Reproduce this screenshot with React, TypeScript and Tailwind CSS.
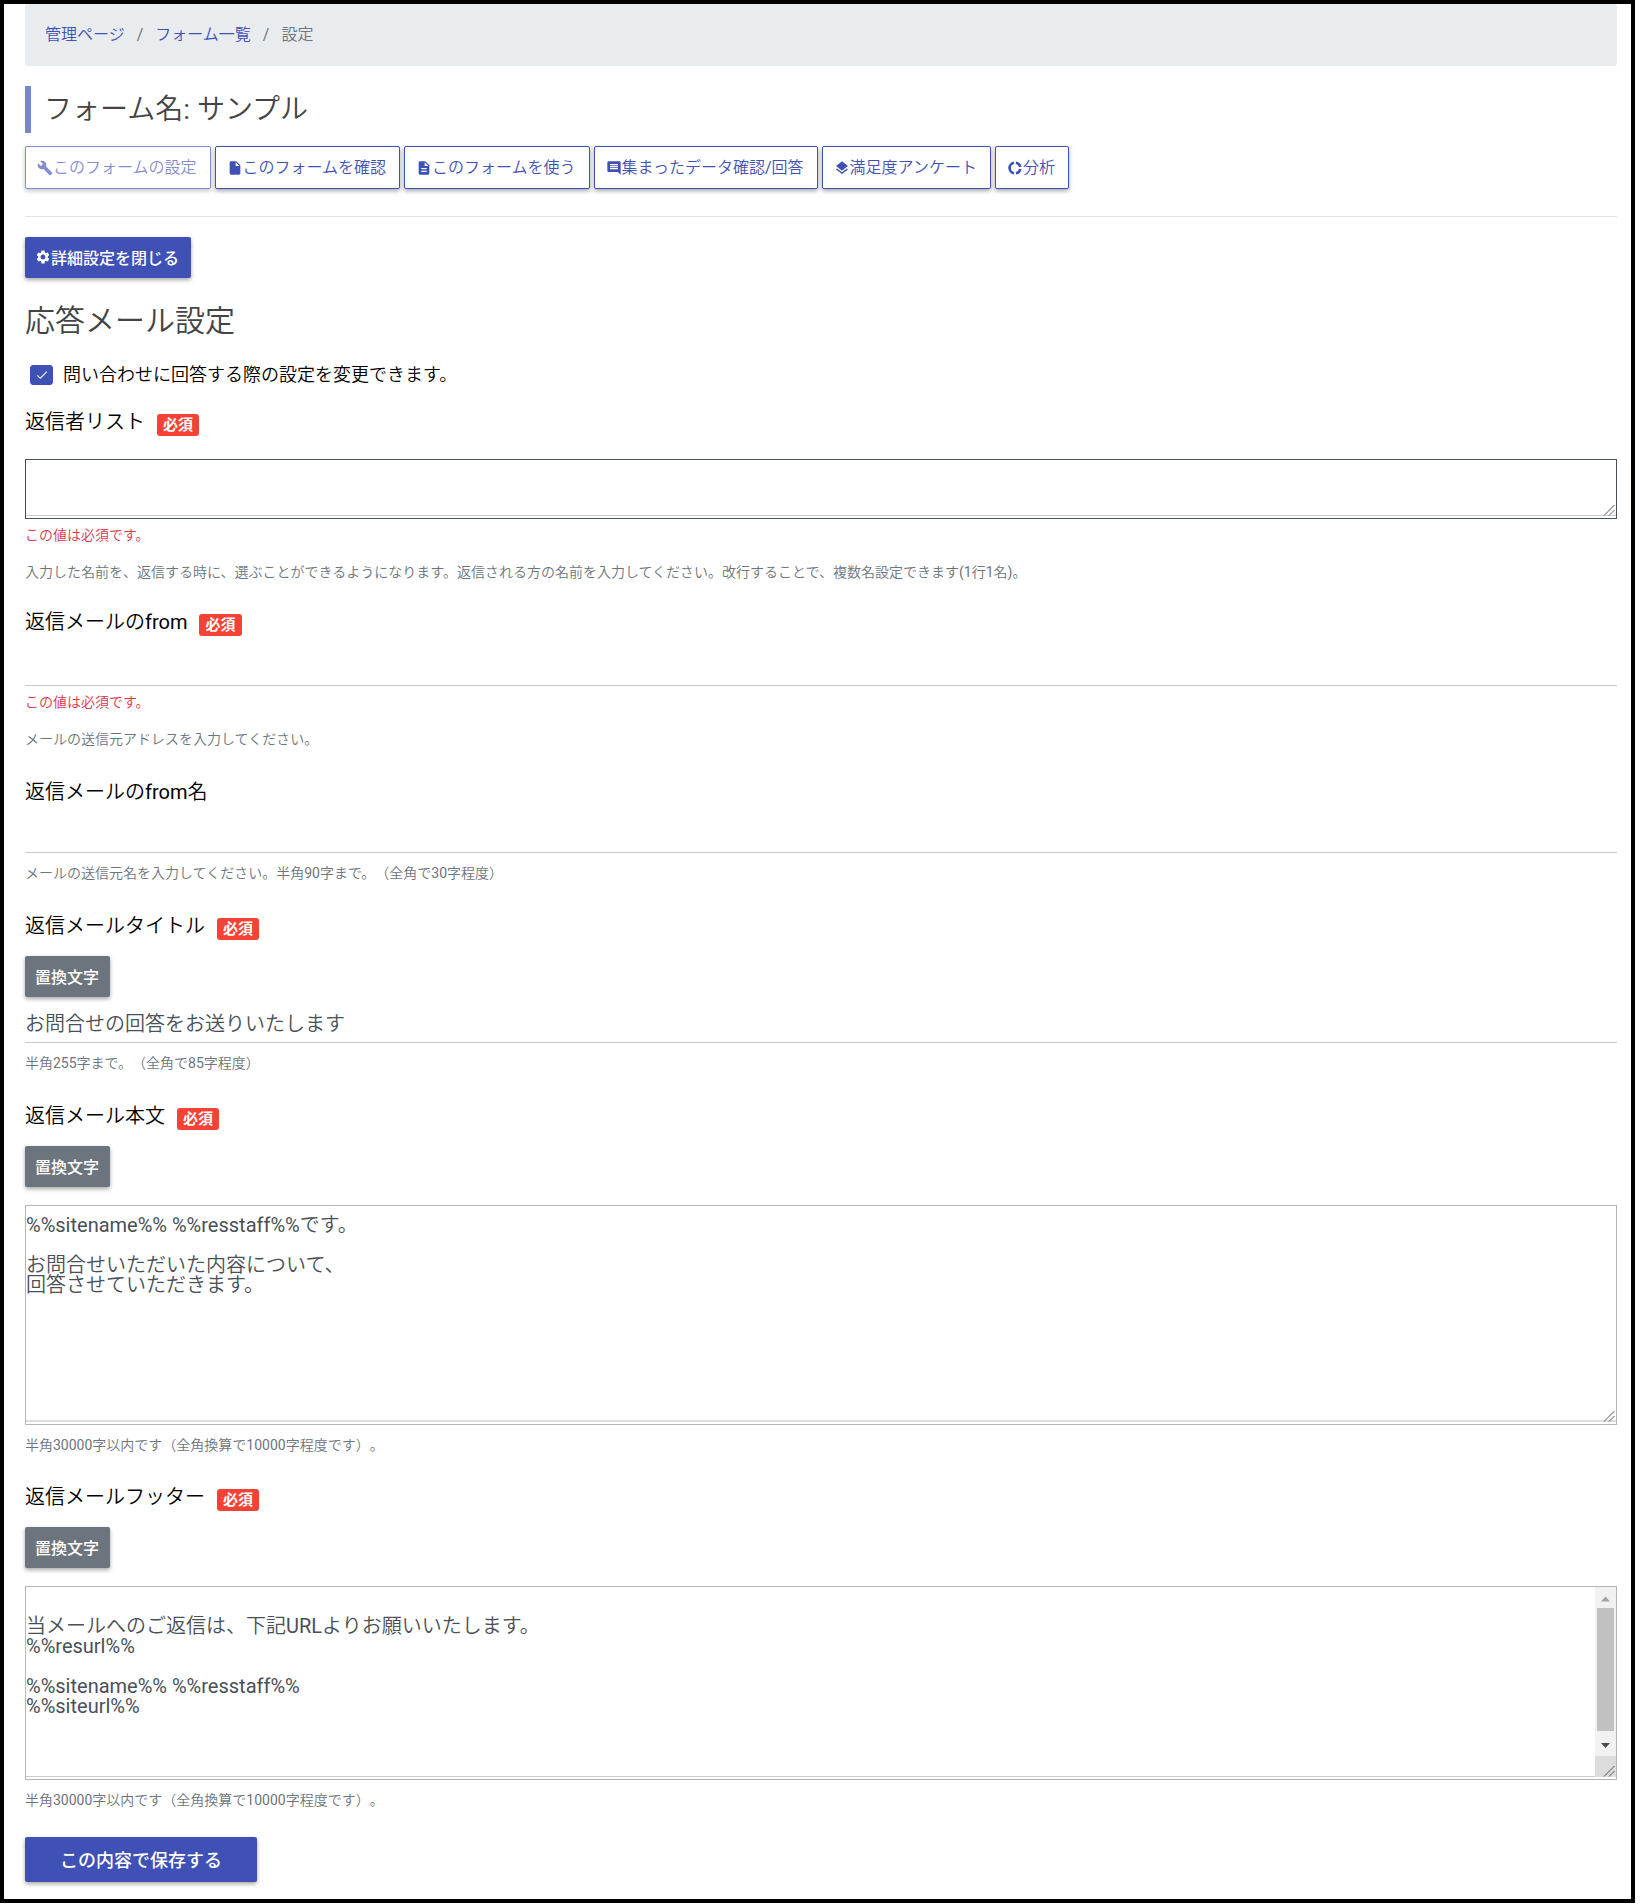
import { useState, type ReactNode } from "react";
import {
  MdBuild,
  MdInsertDriveFile,
  MdDescription,
  MdComment,
  MdLayers,
  MdSettings,
  MdCheck,
} from "react-icons/md";

function DonutIcon() {
  return (
    <svg viewBox="0 0 24 24" className="size-4" fill="none" stroke="currentColor" strokeWidth="4" aria-hidden="true">
      <path d="M13.4 4.1a8 8 0 0 1 6.500 6.500M19.900 13.400a8 8 0 0 1-6.500 6.500M10.600 19.900a8 8 0 0 1 0-15.800" />
    </svg>
  );
}

const tabs: { label: string; icon: ReactNode; disabled?: boolean }[] = [
  { label: "このフォームの設定", icon: <MdBuild className="size-4" />, disabled: true },
  { label: "このフォームを確認", icon: <MdInsertDriveFile className="size-4" /> },
  { label: "このフォームを使う", icon: <MdDescription className="size-4" /> },
  { label: "集まったデータ確認/回答", icon: <MdComment className="size-4" /> },
  { label: "満足度アンケート", icon: <MdLayers className="size-4" /> },
  { label: "分析", icon: <DonutIcon /> },
];

function FieldLabel({ id, required, children }: { id: string; required?: boolean; children: ReactNode }) {
  return (
    <div className="flex items-end gap-3">
      <label htmlFor={id} className="pt-[3px] text-xl leading-[27px] text-black">
        {children}
      </label>
      {required && (
        <span className="rounded-[3px] bg-[#f44336] px-[6px] pb-[2px] font-['Noto_Sans_CJK_JP',sans-serif] text-[15px] leading-5 font-bold text-white">必須</span>
      )}
    </div>
  );
}

function ErrorText({ children }: { children: ReactNode }) {
  return <p className="mt-[6px] text-sm leading-[21px] text-[#dc3545]">{children}</p>;
}

function HelpText({ wide, children }: { wide?: boolean; children: ReactNode }) {
  return (
    <p className={wide ? "mt-4 text-sm leading-[21px] text-[#6c757d]" : "mt-[10px] text-sm leading-[21px] text-[#6c757d]"}>
      {children}
    </p>
  );
}

function ReplaceButton() {
  return (
    <button
      type="button"
      className="mt-4 block rounded-[2px] bg-[#6c757d] pt-2 pr-[11px] pb-[9px] pl-[10px] font-['Noto_Sans_CJK_JP',sans-serif] text-base leading-6 font-medium text-white shadow-[0_2px_4px_rgba(0,0,0,0.35)]"
    >
      置換文字
    </button>
  );
}

function Grip() {
  return (
    <svg viewBox="0 0 12 12" className="pointer-events-none absolute right-px bottom-[2px] size-3" stroke="#555" fill="none" aria-hidden="true">
      <path d="M1 11.5 11.5 1M6 11.5 11.5 6" />
    </svg>
  );
}

function ScrollBar() {
  return (
    <div className="absolute top-0 right-0 bottom-[2px] flex w-[21px] flex-col bg-[#f1f1f1]" aria-hidden="true">
      <svg viewBox="0 0 21 21" className="h-[21px]">
        <path d="M6 14.5 10.5 9.5 15 14.5Z" fill="#a3a3a3" />
      </svg>
      <div className="mx-[2px] grow bg-[#c1c1c1]" />
      <svg viewBox="0 0 21 25" className="h-[25px]">
        <path d="M6 12 15 12 10.5 17Z" fill="#444a50" />
      </svg>
      <div className="h-[21px] bg-[#dcdcdc]" />
    </div>
  );
}

function App() {
  const [checked, setChecked] = useState(true);
  return (
    <div
      lang="ja"
      className="mr-[5px] mb-px border-4 border-black bg-white pr-[14px] pb-[17px] pl-[21px] font-[Roboto,'Noto_Sans_CJK_JP_DemiLight','Noto_Sans_CJK_JP',sans-serif] font-normal [text-spacing-trim:space-all]"
    >
      <nav aria-label="breadcrumb" className="rounded-[3px] bg-[#e9ecef] px-5 py-[19px]">
        <ol className="flex text-base leading-6 text-[#6c757d]">
          <li><a href="#admin" className="text-[#3f51b5]">管理ページ</a></li>
          <li className="before:px-3 before:content-['/']"><a href="#forms" className="text-[#3f51b5]">フォーム一覧</a></li>
          <li className="before:px-3 before:content-['/']" aria-current="page">設定</li>
        </ol>
      </nav>

      <h1 className="mt-5 border-l-[6px] border-[#7986cb] pl-[13px] text-[28px] leading-[47px] text-[#444]">フォーム名: サンプル</h1>

      <div className="mt-[13px] flex flex-wrap gap-1">
        {tabs.map((t) => (
          <button
            key={t.label}
            type="button"
            disabled={t.disabled}
            className="flex items-center rounded-[2px] border border-[#3f51b5] bg-white pt-[9px] pr-[13px] pb-2 pl-[11px] text-base leading-6 text-[#3f51b5] shadow-[0_2px_4px_rgba(0,0,0,0.35)] disabled:opacity-65"
          >
            {t.icon}
            {t.label}
          </button>
        ))}
      </div>

      <hr className="mt-[27px] border-[#e3e3e3]" />

      <button type="button" className="mt-5 flex items-center rounded-[2px] bg-[#3f51b5] pt-2 pr-3 pb-[9px] pl-[10px] font-['Noto_Sans_CJK_JP',sans-serif] text-base leading-6 font-medium text-white shadow-[0_2px_4px_rgba(0,0,0,0.35)]">
        <MdSettings className="size-4" />
        詳細設定を閉じる
      </button>

      <h2 className="mt-[25px] text-[30px] leading-9 text-[#444]">応答メール設定</h2>

      <div className="mt-6 flex items-center gap-[10px] pl-[5px]">
        <span className="relative flex">
          <input
            id="reply-enabled"
            type="checkbox"
            checked={checked}
            onChange={(e) => setChecked(e.target.checked)}
            className="h-5 w-[23px] appearance-none rounded-[3px] border border-[#3f51b5] checked:bg-[#3f51b5]"
          />
          {checked && <MdCheck className="pointer-events-none absolute inset-0 m-auto size-[14px] text-white" />}
        </span>
        <label htmlFor="reply-enabled" className="text-lg leading-6 text-black">問い合わせに回答する際の設定を変更できます。</label>
      </div>

      <div className="mt-[19px]">
        <FieldLabel id="staff" required>返信者リスト</FieldLabel>
        <div className="relative mt-[23px] border border-[#495057] pb-[2px]">
          <textarea id="staff" className="block h-[56px] w-full resize-none border-b border-[#ccc] pt-2 text-xl leading-5 outline-none" />
          <Grip />
        </div>
        <ErrorText>この値は必須です。</ErrorText>
        <HelpText wide>入力した名前を、返信する時に、選ぶことができるようになります。返信される方の名前を入力してください。改行することで、複数名設定できます(1行1名)。</HelpText>
      </div>

      <div className="mt-[23px]">
        <FieldLabel id="from" required>返信メールのfrom</FieldLabel>
        <input id="from" type="email" className="mt-[11px] block h-[39px] w-full border-b border-[#c8c8c8] text-xl text-[#495057] outline-none" />
        <ErrorText>この値は必須です。</ErrorText>
        <HelpText wide>メールの送信元アドレスを入力してください。</HelpText>
      </div>

      <div className="mt-[26px]">
        <FieldLabel id="from-name">返信メールのfrom名</FieldLabel>
        <input id="from-name" type="text" className="mt-2 block h-[39px] w-full border-b border-[#c8c8c8] text-xl text-[#495057] outline-none" />
        <HelpText>メールの送信元名を入力してください。半角90字まで。（全角で30字程度）</HelpText>
      </div>

      <div className="mt-[26px]">
        <FieldLabel id="subject" required>返信メールタイトル</FieldLabel>
        <ReplaceButton />
        <input id="subject" type="text" defaultValue="お問合せの回答をお送りいたします" className="mt-[7px] block h-[39px] w-full border-b border-[#c8c8c8] pb-[2px] text-xl text-[#495057] outline-none" />
        <HelpText>半角255字まで。（全角で85字程度）</HelpText>
      </div>

      <div className="mt-[26px]">
        <FieldLabel id="body" required>返信メール本文</FieldLabel>
        <ReplaceButton />
        <div className="relative mt-[18px] border border-[#b5b5b5] pb-[2px]">
          <textarea
            id="body"
            className="block h-[216px] w-full resize-none border-b-2 border-[#ddd] pt-[9px] text-xl leading-5 text-[#495057] outline-none"
            defaultValue={"%%sitename%% %%resstaff%%です。\n\nお問合せいただいた内容について、\n回答させていただきます。"}
          />
          <Grip />
        </div>
        <HelpText>半角30000字以内です（全角換算で10000字程度です）。</HelpText>
      </div>

      <div className="mt-[25px]">
        <FieldLabel id="footer" required>返信メールフッター</FieldLabel>
        <ReplaceButton />
        <div className="relative mt-[18px] border border-[#b5b5b5] pb-[2px]">
          <textarea
            id="footer"
            className="block h-[190px] w-full resize-none border-b border-[#ccc] pt-[9px] pr-6 text-xl leading-5 text-[#495057] outline-none"
            defaultValue={"\n当メールへのご返信は、下記URLよりお願いいたします。\n%%resurl%%\n\n%%sitename%% %%resstaff%%\n%%siteurl%%"}
          />
          <ScrollBar />
          <Grip />
        </div>
        <HelpText>半角30000字以内です（全角換算で10000字程度です）。</HelpText>
      </div>

      <button type="submit" className="mt-[26px] block rounded-[2px] bg-[#3f51b5] px-[35px] pt-[10px] pb-[11px] font-['Noto_Sans_CJK_JP',sans-serif] text-lg leading-6 font-medium text-white shadow-[0_2px_4px_rgba(0,0,0,0.35)]">
        この内容で保存する
      </button>
    </div>
  );
}

export default App;
